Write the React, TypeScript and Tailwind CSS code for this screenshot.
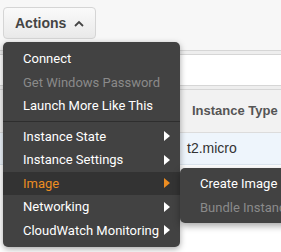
import React from 'react'

const items: { label: string; disabled?: boolean; sub?: boolean; active?: boolean; divider?: boolean }[] = [
  { label: 'Connect' },
  { label: 'Get Windows Password', disabled: true },
  { label: 'Launch More Like This', divider: true },
  { label: 'Instance State', sub: true },
  { label: 'Instance Settings', sub: true },
  { label: 'Image', sub: true, active: true },
  { label: 'Networking', sub: true },
  { label: 'CloudWatch Monitoring', sub: true },
]

function Caret({ color }: { color: string }) {
  return (
    <svg width="6" height="10" viewBox="0 0 6 10" className="shrink-0">
      <path d="M0 0 L6 5 L0 10 Z" fill={color} />
    </svg>
  )
}

export default function App() {
  return (
    <div className="relative w-[281px] h-[252px] overflow-hidden bg-white font-['Liberation_Sans',Arial,sans-serif]">
      {/* toolbar */}
      <div className="h-[50px] bg-[#f7f7f7] px-[3px] pt-[7px]">
        <button className="flex items-center gap-[8px] h-[32px] px-[11px] rounded-[4px] border border-[#d5d5d5] bg-gradient-to-b from-[#fafafa] to-[#e9e9e9] text-[14px] font-bold text-[#444]">
          Actions
          <svg width="10" height="7" viewBox="0 0 10 7">
            <path d="M1 6 L5 2 L9 6" fill="none" stroke="#444" strokeWidth="1.8" />
          </svg>
        </button>
      </div>
      <div className="h-[5px] border-y border-[#d6d6d6] bg-[#eeeeee]" />
      <div className="h-[30px] bg-white" />
      <div className="h-[5px] border-y border-[#d6d6d6] bg-[#eeeeee]" />

      {/* table */}
      <div className="flex h-[43px] items-center whitespace-nowrap bg-[#f2f2f2] border-b border-[#dcdcdc] pl-[192px] text-[13px] font-bold text-[#555]">
        Instance Type
      </div>
      <div className="flex h-[32px] items-center whitespace-nowrap bg-[#eef5fc] border-b border-[#dce6ef] pl-[187px] text-[14px] text-[#333]">
        t2.micro
      </div>

      {/* dropdown */}
      <div className="absolute left-[3px] top-[42px] w-[177px] rounded-[5px] bg-[#424242] py-[5px] shadow-[0_2px_6px_rgba(0,0,0,0.35)] font-['Roboto',sans-serif] text-[13px]">
        {items.map((it) => (
          <div key={it.label}>
            <div
              className={`flex h-[23.5px] items-center justify-between pl-[20px] pr-[10px] ${
                it.active ? 'bg-[#333333] text-[#ec8d22]' : it.disabled ? 'text-[#8a8a8a]' : 'text-white'
              }`}
            >
              <span>{it.label}</span>
              {it.sub && <Caret color={it.active ? '#ec8d22' : '#ffffff'} />}
            </div>
            {it.divider && <div className="my-[3px] h-px bg-[#2e2e2e]" />}
          </div>
        ))}
      </div>

      {/* submenu */}
      <div className="absolute left-[180px] top-[168px] w-[120px] rounded-[5px] bg-[#424242] py-[4px] shadow-[0_3px_7px_rgba(0,0,0,0.35)] font-['Roboto',sans-serif] text-[13px]">
        <div className="flex h-[23.5px] items-center pl-[20px] text-white whitespace-nowrap">Create Image</div>
        <div className="flex h-[23.5px] items-center pl-[20px] text-[#8a8a8a] whitespace-nowrap">Bundle Instance</div>
      </div>
    </div>
  )
}
